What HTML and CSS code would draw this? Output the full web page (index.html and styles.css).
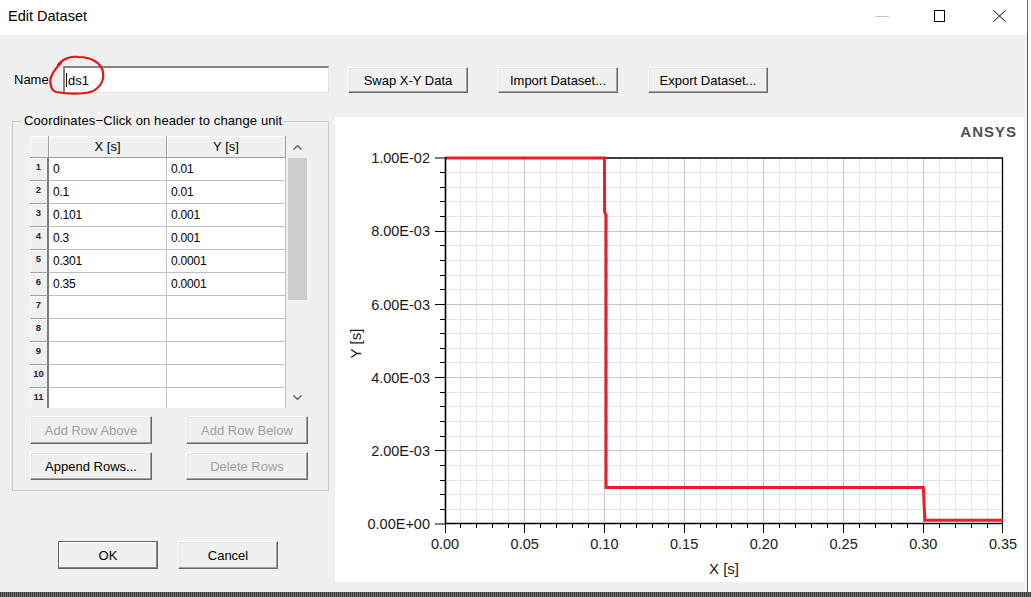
FILE: index.html
```html
<!DOCTYPE html>
<html>
<head>
<meta charset="utf-8">
<title>Edit Dataset</title>
<link rel="stylesheet" href="styles.css">
</head>
<body>
<div class="window">
  <div class="titlebar">
    <span class="title">Edit Dataset</span>
    <div class="controls">
      <svg class="ctl ctl-min" width="14" height="12" viewBox="0 0 14 12"><line x1="0" y1="6.5" x2="14" y2="6.5"/></svg>
      <svg class="ctl ctl-max" width="11" height="12" viewBox="0 0 11 12"><rect x="0.5" y="0.5" width="10" height="11"/></svg>
      <svg class="ctl ctl-close" width="13" height="12" viewBox="0 0 13 12"><path d="M0.5 0.5L12.5 11.5M12.5 0.5L0.5 11.5"/></svg>
    </div>
  </div>
  <div class="content">
    <div class="toprow">
      <label class="name-label">Name:</label>
      <div class="name-input"><span class="caret"></span><span class="name-text">ds1</span></div>
      <button class="btn btn-top btn-swap">Swap X-Y Data</button>
      <button class="btn btn-top btn-next">Import Dataset...</button>
      <button class="btn btn-top btn-next">Export Dataset...</button>
    </div>
    <div class="mainrow">
      <div class="leftcol">
        <fieldset class="group">
          <legend class="group-title">Coordinates−Click on header to change unit</legend>
          <div class="group-inner">
            <div class="table-wrap">
              <div class="grid">
                <div class="hcell corner"></div><div class="hcell">X [s]</div><div class="hcell">Y [s]</div>
                <div class="rcell">1</div><div class="cell">0</div><div class="cell">0.01</div>
                <div class="rcell">2</div><div class="cell">0.1</div><div class="cell">0.01</div>
                <div class="rcell">3</div><div class="cell">0.101</div><div class="cell">0.001</div>
                <div class="rcell">4</div><div class="cell">0.3</div><div class="cell">0.001</div>
                <div class="rcell">5</div><div class="cell">0.301</div><div class="cell">0.0001</div>
                <div class="rcell">6</div><div class="cell">0.35</div><div class="cell">0.0001</div>
                <div class="rcell">7</div><div class="cell"></div><div class="cell"></div>
                <div class="rcell">8</div><div class="cell"></div><div class="cell"></div>
                <div class="rcell">9</div><div class="cell"></div><div class="cell"></div>
                <div class="rcell">10</div><div class="cell"></div><div class="cell"></div>
                <div class="rcell">11</div><div class="cell"></div><div class="cell"></div>
              </div>
              <div class="scrollbar">
                <div class="sb-btn"><svg width="9" height="5" viewBox="0 0 9 5"><polyline points="0.5,4.5 4.5,0.7 8.5,4.5"/></svg></div>
                <div class="sb-thumb"></div>
                <div class="sb-space"></div>
                <div class="sb-btn"><svg width="9" height="5" viewBox="0 0 9 5"><polyline points="0.5,0.5 4.5,4.3 8.5,0.5"/></svg></div>
              </div>
            </div>
            <div class="btnrow">
              <button class="btn btn-row" disabled>Add Row Above</button>
              <button class="btn btn-row" disabled>Add Row Below</button>
            </div>
            <div class="btnrow">
              <button class="btn btn-row">Append Rows...</button>
              <button class="btn btn-row" disabled>Delete Rows</button>
            </div>
          </div>
        </fieldset>
        <div class="okrow">
          <button class="btn btn-ok btn-default">OK</button>
          <button class="btn btn-ok">Cancel</button>
        </div>
      </div>
      <div class="chart">
        <svg class="chart-svg" width="689" height="465" viewBox="0 0 689 465">
          <text class="brand" x="682" y="20" text-anchor="end">ANSYS</text>
          <path class="grid-minor" d="M125.5 41V407M141.5 41V407M157.5 41V407M173.5 41V407M205.5 41V407M221.5 41V407M237.5 41V407M253.5 41V407M285.5 41V407M301.5 41V407M317.5 41V407M333.5 41V407M365.5 41V407M381.5 41V407M396.5 41V407M412.5 41V407M444.5 41V407M460.5 41V407M476.5 41V407M492.5 41V407M524.5 41V407M540.5 41V407M556.5 41V407M572.5 41V407M604.5 41V407M620.5 41V407M636.5 41V407M652.5 41V407M110 55.5H668M110 70.5H668M110 84.5H668M110 99.5H668M110 128.5H668M110 143.5H668M110 158.5H668M110 172.5H668M110 202.5H668M110 216.5H668M110 231.5H668M110 245.5H668M110 275.5H668M110 289.5H668M110 304.5H668M110 319.5H668M110 348.5H668M110 363.5H668M110 377.5H668M110 392.5H668"/>
          <path class="grid-major" d="M189.5 41V407M269.5 41V407M349.5 41V407M428.5 41V407M508.5 41V407M588.5 41V407M110 114.5H668M110 187.5H668M110 260.5H668M110 333.5H668"/>
          <path class="ticks" d="M100 41H110M100 114.5H110M100 187.5H110M100 260.5H110M100 333.5H110M100 407H110M105 55.5H110M105 70.5H110M105 84.5H110M105 99.5H110M105 128.5H110M105 143.5H110M105 158.5H110M105 172.5H110M105 202.5H110M105 216.5H110M105 231.5H110M105 245.5H110M105 275.5H110M105 289.5H110M105 304.5H110M105 319.5H110M105 348.5H110M105 363.5H110M105 377.5H110M105 392.5H110M110.5 407V416M189.5 407V416M269.5 407V416M349.5 407V416M428.5 407V416M508.5 407V416M588.5 407V416M667.5 407V416M125.5 407V411M141.5 407V411M157.5 407V411M173.5 407V411M205.5 407V411M221.5 407V411M237.5 407V411M253.5 407V411M285.5 407V411M301.5 407V411M317.5 407V411M333.5 407V411M365.5 407V411M381.5 407V411M396.5 407V411M412.5 407V411M444.5 407V411M460.5 407V411M476.5 407V411M492.5 407V411M524.5 407V411M540.5 407V411M556.5 407V411M572.5 407V411M604.5 407V411M620.5 407V411M636.5 407V411M652.5 407V411"/>
          <path class="frame" d="M110 41H667.5V407"/>
          <polyline class="series" points="110,41 269.43,41 269.6,95 271.03,98 271.03,370.4 588.29,370.4 589.89,403.34 668,403.34"/>
          <path class="axes" d="M110.5 40V406.5H668"/>
          <g class="ylabels">
            <text x="95" y="46.2">1.00E-02</text>
            <text x="95" y="119.4">8.00E-03</text>
            <text x="95" y="192.6">6.00E-03</text>
            <text x="95" y="265.8">4.00E-03</text>
            <text x="95" y="339">2.00E-03</text>
            <text x="95" y="412.2">0.00E+00</text>
          </g>
          <g class="xlabels">
            <text x="110" y="432">0.00</text>
            <text x="189.7" y="432">0.05</text>
            <text x="269.4" y="432">0.10</text>
            <text x="349.1" y="432">0.15</text>
            <text x="428.9" y="432">0.20</text>
            <text x="508.6" y="432">0.25</text>
            <text x="588.3" y="432">0.30</text>
            <text x="668" y="432">0.35</text>
          </g>
          <text class="axis-title" x="389" y="457" text-anchor="middle">X [s]</text>
          <text class="axis-title" x="26" y="226.5" text-anchor="middle" transform="rotate(-90 26 226.5)">Y [s]</text>
        </svg>
      </div>
    </div>
  </div>
  <svg class="annot" width="120" height="110" viewBox="0 0 120 110">
    <path d="M58 65 C63 58, 72 56, 79 57 C90 57, 101 62, 103 72 C105 84, 96 92, 85 93 C75 94, 62 93, 56 92 C50 90, 49 80, 52 75 C54 70, 57 67, 61 63"/>
  </svg>
</div>
<div class="taskbar"></div>
</body>
</html>
```
FILE: styles.css
```css
* { box-sizing: border-box; }
html, body { margin: 0; padding: 0; }
body {
  width: 1031px;
  height: 597px;
  overflow: hidden;
  background: #fff;
  font-family: "Liberation Sans", Arial, sans-serif;
  color: #000;
}

.window {
  position: relative;
  width: 1028px;
  height: 592px;
  border-right: 1px solid #606060;
  display: flex;
  flex-direction: column;
}

.titlebar {
  height: 35px;
  background: #fff;
  display: flex;
  align-items: center;
  padding: 0 21px 3px 8px;
}
.title { font-size: 14.5px; }
.controls { margin-left: auto; display: flex; align-items: center; }
.ctl { display: block; fill: none; stroke-width: 1; }
.ctl-min { stroke: #c4c4c4; }
.ctl-max { stroke: #000; margin-left: 45px; }
.ctl-close { stroke: #000; margin-left: 48px; }

.content {
  flex: 1;
  background: #f0f0f0;
  padding: 31px 3px 10px 0;
  display: flex;
  flex-direction: column;
  font-size: 13px;
}

.toprow {
  display: flex;
  align-items: flex-start;
  height: 27px;
  padding-left: 14px;
}
.name-label { width: 49px; line-height: 27px; }
.name-input {
  width: 266px;
  height: 27px;
  background: #fff;
  border-style: solid;
  border-width: 2px 1px 1px 2px;
  border-color: #848484 #e3e3e3 #e3e3e3 #848484;
  display: flex;
  align-items: center;
  padding-left: 1px;
}
.caret { display: block; width: 1px; height: 14px; background: #000; margin-right: 1px; }
.name-text { font-size: 13px; }

.btn {
  font-family: "Liberation Sans", Arial, sans-serif;
  font-size: 13px;
  color: #000;
  background: #f0f0f0;
  border: 1px solid;
  border-color: #ffffff #696969 #696969 #ffffff;
  box-shadow: inset -1px -1px #a0a0a0, inset 1px 1px #e3e3e3;
  padding: 0;
  margin: 0;
}
.btn:disabled { color: #a0a0a0; }
.btn-top { width: 120px; height: 26px; margin-top: 1px; }
.btn-swap { margin-left: 19px; }
.btn-next { margin-left: 30px; }
.btn-row { width: 122px; height: 28px; }
.btn-ok { width: 100px; height: 28px; }
.btn-default {
  border-color: #646464;
  box-shadow: inset -1px -1px #8a8a8a, inset 1px 1px #fff;
}

.mainrow {
  flex: 1;
  margin-top: 20px;
  display: flex;
  gap: 6px;
  padding-left: 12px;
}
.leftcol { width: 317px; display: flex; flex-direction: column; }

.group {
  margin: 0;
  padding: 0;
  min-width: 0;
  border: 1px solid #c8c8c8;
}
.group-title {
  margin-left: 8px;
  padding: 0 2px 0 3px;
  font-size: 13px;
  letter-spacing: 0.12px;
  line-height: 16px;
}
.group-inner { padding: 7px 20px 10px 17px; }

.table-wrap { display: flex; height: 272px; }
.grid {
  width: 256px;
  height: 272px;
  overflow: hidden;
  display: grid;
  grid-template-columns: 19px 118px 119px;
  grid-template-rows: 22px;
  grid-auto-rows: 23px;
  align-content: start;
}
.cell {
  background: #fff;
  border-right: 1px solid #c0c0c0;
  border-bottom: 1px solid #c0c0c0;
  padding-left: 4px;
  font-size: 12px;
  letter-spacing: -0.2px;
  line-height: 22px;
  white-space: nowrap;
}
.hcell {
  background: #f0f0f0;
  border-right: 1px solid #a0a0a0;
  border-bottom: 1px solid #a0a0a0;
  box-shadow: inset 1px 1px #fff;
  text-align: center;
  font-size: 13px;
  line-height: 21px;
}
.rcell {
  background: #f0f0f0;
  border-right: 2px solid #7a7a7a;
  border-bottom: 1px solid #a0a0a0;
  box-shadow: inset 1px 1px #fff;
  text-align: center;
  font-size: 9.5px;
  font-weight: bold;
  line-height: 10px;
  padding-top: 4px;
  color: #2a2230;
}

.scrollbar {
  width: 21px;
  background: #f0f0f0;
  display: flex;
  flex-direction: column;
}
.sb-btn {
  height: 22px;
  display: flex;
  align-items: center;
  justify-content: center;
  padding-left: 1px;
}
.sb-btn svg { display: block; fill: none; stroke: #606060; stroke-width: 1.4; }
.sb-thumb { height: 142px; margin-left: 2px; background: #cdcdcd; }
.sb-space { flex: 1; }

.btnrow { display: flex; justify-content: space-between; margin-top: 8px; }

.okrow { margin-top: 50px; padding-left: 46px; display: flex; gap: 20px; }

.chart {
  width: 689px;
  height: 465px;
  margin-top: 4px;
  background: #fff;
}
.chart-svg { display: block; font-family: "Liberation Sans", Arial, sans-serif; }
.brand { font-size: 15px; font-weight: bold; fill: #505050; letter-spacing: 1px; }
.grid-minor { stroke: #e4e4e4; stroke-width: 1; fill: none; }
.grid-major { stroke: #c8c8c8; stroke-width: 1; fill: none; }
.ticks { stroke: #000; stroke-width: 1; fill: none; }
.frame { stroke: #000; stroke-width: 1.3; fill: none; }
.axes { stroke: #000; stroke-width: 1.6; fill: none; }
.series { stroke: #ee1c25; stroke-width: 3; fill: none; stroke-linejoin: miter; }
.ylabels text { font-size: 14.5px; fill: #1a1a1a; text-anchor: end; }
.xlabels text { font-size: 14.5px; fill: #1a1a1a; text-anchor: middle; }
.axis-title { font-size: 15px; fill: #1a1a1a; }

.annot {
  position: absolute;
  left: 0;
  top: 0;
  pointer-events: none;
  fill: none;
  stroke: #e81212;
  stroke-width: 2.2;
  stroke-linecap: round;
}

.taskbar {
  width: 1031px;
  height: 5px;
  background: #4a4a4a repeating-linear-gradient(90deg, #3a3a3a 0 1px, #6e6e6e 1px 2px);
}
```
